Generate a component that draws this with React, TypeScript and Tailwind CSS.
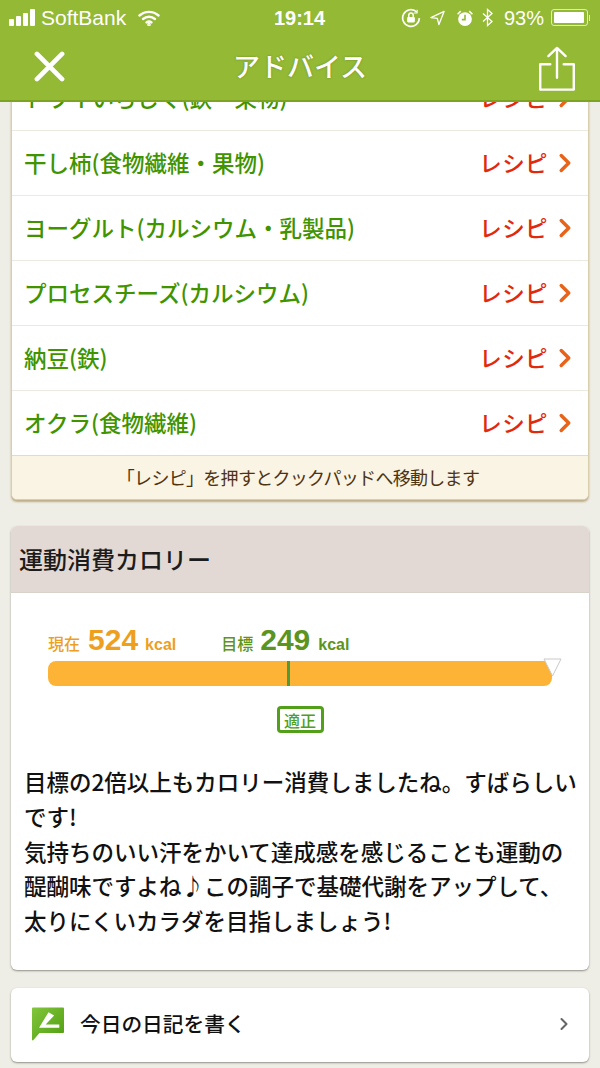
import { ChevronRight } from 'lucide-react';

const FOODS = [
  'ドライいちじく(鉄・果物)',
  '干し柿(食物繊維・果物)',
  'ヨーグルト(カルシウム・乳製品)',
  'プロセスチーズ(カルシウム)',
  '納豆(鉄)',
  'オクラ(食物繊維)',
];

function StatusBar() {
  return (
    <div className="flex h-[35px] items-center justify-between pl-[9px] pr-[10px] font-['Liberation_Sans'] text-white">
      <div className="flex w-[200px] items-center">
        <div className="flex items-end gap-[2px]">
          <span className="h-[7px] w-[5px] rounded-[1px] bg-white" />
          <span className="h-[10px] w-[5px] rounded-[1px] bg-white" />
          <span className="h-[13px] w-[5px] rounded-[1px] bg-white" />
          <span className="h-[17px] w-[5px] rounded-[1px] bg-white" />
        </div>
        <span className="ml-[6px] text-[21px] leading-none">SoftBank</span>
        <svg className="ml-[12px]" width="22" height="16" viewBox="0 0 22 16" fill="none" stroke="white" strokeWidth="2.400" strokeLinecap="round">
          <path d="M1.500 5.500C7 .6 15 .6 20.500 5.500" />
          <path d="M5 9c3.500-3 8.500-3 12 0" />
          <path d="M8.500 12.400c1.500-1.100 3.500-1.100 5 0" />
          <circle cx="11" cy="14.500" r="0.600" fill="white" />
        </svg>
      </div>
      <span className="text-[20px] font-bold leading-none">19:14</span>
      <div className="flex w-[200px] items-center justify-end">
        <svg width="20" height="20" viewBox="0 0 18 18" fill="none" stroke="white" strokeWidth="1.500">
          <path d="M16.500 9a7.500 7.500 0 1 1-2.300-5.400" />
          <path d="M14.500 1.500v3h-3" strokeWidth="1" />
          <rect x="5.500" y="8" width="7" height="5" rx="1" fill="white" stroke="none" />
          <path d="M7 8V6.500a2 2 0 0 1 4 0V8" strokeWidth="1.300" />
        </svg>
        <svg className="ml-[9px]" width="15" height="16" viewBox="0 0 16 16" fill="none" stroke="white" strokeWidth="1.400" strokeLinejoin="round">
          <path d="M15 1 1 7.500l6.800.9L9.500 15z" />
        </svg>
        <svg className="ml-[11px]" width="18" height="18" viewBox="0 0 17 17" fill="white">
          <circle cx="8.500" cy="9.500" r="6.500" />
          <path d="M1 4.500 4 1.500 5 2.500 2 5.500zM16 4.500l-3-3-1 1 3 3z" />
          <path d="M8.500 5.500v4.500H5.500" fill="none" stroke="#93b935" strokeWidth="1.500" />
        </svg>
        <svg className="ml-[8px]" width="11" height="19" viewBox="0 0 11 18" fill="none" stroke="white" strokeWidth="1.300">
          <path d="M1 5l9 8-4.500 4V1L10 5 1 13" />
        </svg>
        <span className="ml-[11px] text-[20px] leading-none">93%</span>
        <div className="ml-[7px] flex h-[17px] w-[37px] items-center rounded-[3px] border border-white/70 p-[2px]">
          <div className="h-full w-[30px] rounded-[1px] bg-white" />
        </div>
        <span className="ml-[1px] h-[6px] w-[1px] bg-white/70" />
      </div>
    </div>
  );
}

function NavBar() {
  return (
    <div className="relative flex h-[65px] items-center justify-between pl-[34px] pr-[23px] text-white">
      <svg width="31" height="31" viewBox="0 0 32 32" stroke="white" strokeWidth="4.800" strokeLinecap="round" className="mt-[-2px]">
        <path d="M3 3l26 26M29 3 3 29" />
      </svg>
      <span className="absolute left-0 right-0 top-[12px] text-center text-[27px] font-medium leading-[38px] [text-shadow:0_0_2px_rgba(70,100,10,0.6)]">
        アドバイス
      </span>
      <svg width="40" height="46" viewBox="0 0 40 48" fill="none" stroke="white" strokeWidth="2.500" strokeLinecap="round" strokeLinejoin="round" className="mt-[3px]">
        <path d="M13 19H2.500v26.500h35V19H27" />
        <path d="M20 33V2M11 10.500 20 2l9 8.500" />
      </svg>
    </div>
  );
}

function FoodRow({ name, first }: { name: string; first: boolean }) {
  return (
    <div className={`flex h-[65px] items-center justify-between pl-[12px] pr-[8px] ${first ? '' : 'border-t border-[#ebe9e2]'}`}>
      <span className="text-[22.5px] font-medium text-[#3f9400]">{name}</span>
      <div className="flex items-center text-[#e2290c]">
        <span className="text-[22.5px] font-medium tracking-[0.4px]">レシピ</span>
        <ChevronRight size={30} strokeWidth={2.800} className="ml-[2px] text-[#e8641b]" />
      </div>
    </div>
  );
}

function CalorieBar() {
  return (
    <div className="px-[37px] pt-[29px]">
      <div className="flex items-baseline">
        <span className="text-[16px] font-medium text-[#ee9f1e]">現在</span>
        <span className="ml-[8px] font-['Liberation_Sans'] text-[30px] font-bold leading-[36px] text-[#ee9f1e]">524</span>
        <span className="ml-[7px] font-['Liberation_Sans'] text-[16px] font-bold text-[#ee9f1e]">kcal</span>
        <span className="ml-[45px] text-[16px] font-medium text-[#5c9420]">目標</span>
        <span className="ml-[7px] font-['Liberation_Sans'] text-[30px] font-bold leading-[36px] text-[#5c9420]">249</span>
        <span className="ml-[8px] font-['Liberation_Sans'] text-[16px] font-bold text-[#5c9420]">kcal</span>
      </div>
      <div className="relative mt-[3px] h-[25px] w-[504px] rounded-[8px] bg-[#fdb436]">
        <div className="absolute bottom-0 left-[239px] top-0 w-[3px] bg-[#4f9a3a]" />
        <svg className="absolute -right-[10px] -top-[3px]" width="19" height="20" viewBox="0 0 19 20">
          <path d="M1 1h17l-8.500 17z" fill="white" stroke="#c9c9c9" strokeWidth="1" />
        </svg>
      </div>
      <div className="mt-[20px] flex justify-center">
        <span className="flex h-[27px] w-[47px] items-center justify-center rounded-[4px] border-[3px] border-[#52a01a] text-[16px] font-medium leading-none text-[#52a01a]">
          適正
        </span>
      </div>
    </div>
  );
}

export default function App() {
  return (
    <div className="relative h-[1068px] w-[600px] overflow-hidden bg-[#efeee6] font-['Noto_Sans_CJK_JP',sans-serif] text-[#1a1a1a]">
      <div className="relative z-10 h-[102px] border-b-2 border-[#7da325] bg-[#93b935]">
        <StatusBar />
        <NavBar />
      </div>

      <div className="mt-[-38px] flex flex-col px-[11px]">
        {/* Recipe list */}
        <div className="overflow-hidden rounded-[6px] border border-[#d8cfae] bg-white shadow-[0_2px_2px_rgba(150,120,60,0.55)]">
          {FOODS.map((name, i) => (
            <FoodRow key={name} name={name} first={i === 0} />
          ))}
          <div className="flex h-[44px] items-center justify-center border-t border-[#e6dcb9] bg-[#f9f4e3] pr-[4px] text-[18px] tracking-[-0.7px] text-[#4f3311]">
            「レシピ」を押すとクックパッドへ移動します
          </div>
        </div>

        {/* Exercise calories */}
        <div className="mt-[26px] overflow-hidden rounded-[6px] bg-white shadow-[0_1px_2px_rgba(80,80,70,0.6)]">
          <div className="flex h-[67px] items-center border-b border-[#d9d2cb] bg-[#e3d9d4] px-[8px] text-[24px] font-medium text-[#1c1c1c]">
            運動消費カロリー
          </div>
          <CalorieBar />
          <p className="mt-[31px] whitespace-nowrap px-[13px] pb-[32px] text-[22.5px] font-medium leading-[34.8px] text-[#111]">
            目標の2倍以上もカロリー消費しましたね。すばらしい
            <br />
            です!
            <br />
            気持ちのいい汗をかいて達成感を感じることも運動の
            <br />
            醍醐味ですよね♪この調子で基礎代謝をアップして、
            <br />
            太りにくいカラダを目指しましょう!
          </p>
        </div>

        {/* Diary link */}
        <div className="mt-[18px] flex h-[74px] items-center rounded-[6px] bg-white pb-[2px] pl-[21px] pr-[15px] shadow-[0_1px_2px_rgba(80,80,70,0.6)]">
          <svg width="32" height="34" viewBox="0 0 34 35">
            <defs>
              <linearGradient id="diary" x1="0" y1="0" x2="1" y2="1">
                <stop offset="0" stopColor="#82c63c" />
                <stop offset="1" stopColor="#4f9d10" />
              </linearGradient>
            </defs>
            <path d="M1 0h32a1 1 0 0 1 1 1v25a1 1 0 0 1-1 1H8L1 35a1 1 0 0 1-1-1V1a1 1 0 0 1 1-1z" fill="url(#diary)" />
            <path d="M7.500 21.500 17.500 5l6 3.500L14.500 18h14.500v3.500z" fill="white" />
          </svg>
          <span className="ml-[16px] flex-1 text-[20.7px] font-medium text-[#111]">今日の日記を書く</span>
          <ChevronRight size={20} strokeWidth={2.500} className="text-[#666]" />
        </div>
      </div>
    </div>
  );
}
